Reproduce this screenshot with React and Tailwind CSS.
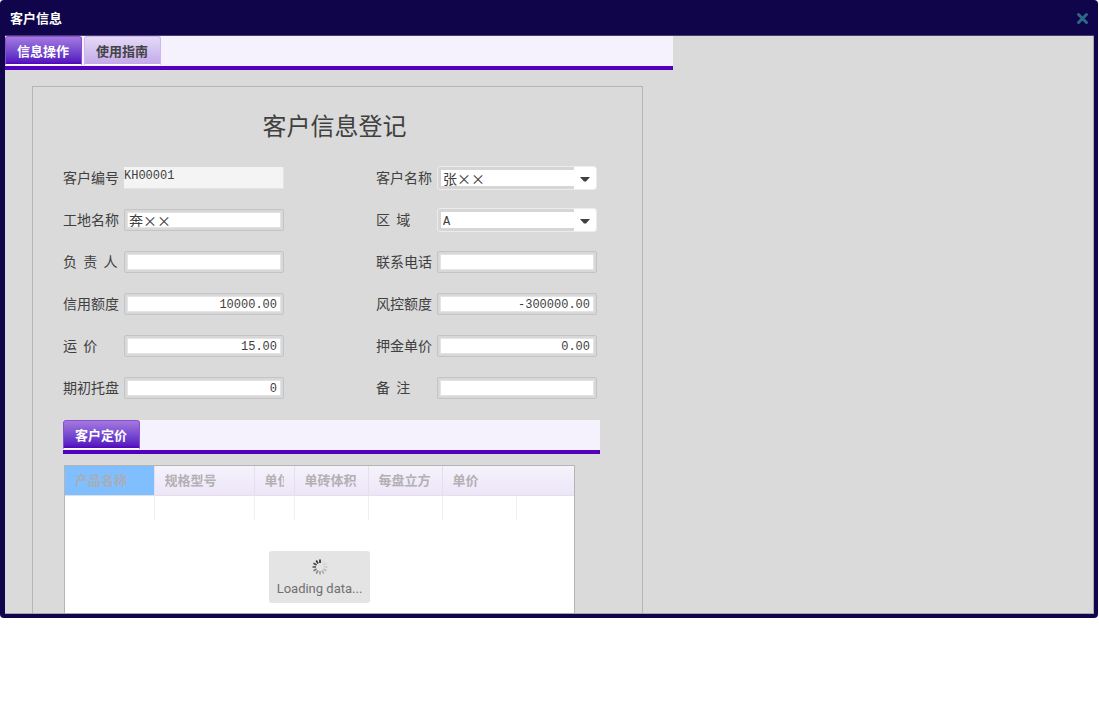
import React from 'react';

const columns = [
  { name: '产品名称', width: 'w-[89px]', sorted: true },
  { name: '规格型号', width: 'w-[100px]' },
  { name: '单位', width: 'w-[40px]' },
  { name: '单砖体积', width: 'w-[74px]' },
  { name: '每盘立方', width: 'w-[74px]' },
  { name: '单价', width: 'w-[74px]' },
];

const fields = [
  { id: 'code', label: '客户编号', value: 'KH00001', kind: 'readonly' },
  { id: 'name', label: '客户名称', value: '张××', kind: 'select' },
  { id: 'site', label: '工地名称', value: '奔××' },
  { id: 'area', label: '区\u00a0\u00a0域', value: 'A', kind: 'select' },
  { id: 'owner', label: '负\u00a0\u00a0责\u00a0\u00a0人', value: '' },
  { id: 'phone', label: '联系电话', value: '' },
  { id: 'credit', label: '信用额度', value: '10000.00', kind: 'number' },
  { id: 'risk', label: '风控额度', value: '-300000.00', kind: 'number' },
  { id: 'freight', label: '运\u00a0\u00a0价', value: '15.00', kind: 'number' },
  { id: 'deposit', label: '押金单价', value: '0.00', kind: 'number' },
  { id: 'pallet', label: '期初托盘', value: '0', kind: 'number' },
  { id: 'remark', label: '备\u00a0\u00a0注', value: '' },
];

const monoText = "text-xs font-['Liberation_Mono','Noto_Sans_CJK_SC',monospace]";
const cjkText = "text-sm font-['Noto_Sans_CJK_SC',sans-serif]";

function Control({ id, value, kind }) {
  if (kind === 'readonly') {
    return (
      <input
        id={id}
        readOnly
        defaultValue={value}
        className={`h-[22px] w-40 border-r border-b border-[#e4e4e4] bg-[#f4f4f4] pb-1 text-[#404040] outline-none ${monoText}`}
      />
    );
  }
  if (kind === 'select') {
    return (
      <span className="flex h-6 w-40 items-stretch overflow-hidden rounded-[3px] border border-[#ececec] bg-[#d6d6d6]">
        <select
          id={id}
          defaultValue={value}
          className={`my-[3px] ml-[3px] min-w-0 flex-1 appearance-none bg-white pl-0.5 text-[#404040] outline-none ${value === 'A' ? `pt-0.5 ${monoText}` : cjkText} leading-4`}
        >
          <option>{value}</option>
        </select>
        <span className="flex w-[22px] items-center justify-center bg-white">
          <svg width="10" height="5" viewBox="0 0 10 5" className="mt-0.5">
            <path d="M0 0h10L6 4.5H4z" fill="#404040" />
          </svg>
        </span>
      </span>
    );
  }
  return (
    <span className="flex h-[22px] w-40 rounded-[2px] border border-[#c4c4c4] bg-[#d8d8d8] p-0.5">
      <input
        id={id}
        defaultValue={value}
        className={`w-full min-w-0 border border-[#e4e4e4] bg-white pr-[3px] pl-px text-[#404040] outline-none ${kind === 'number' ? `pt-0.5 text-right ${monoText}` : cjkText}`}
      />
    </span>
  );
}

function Tab({ active, children }) {
  return (
    <button
      type="button"
      className={`flex h-[29px] w-[77px] items-center rounded-t-[3px] border pl-[11px] text-[13px] font-bold whitespace-nowrap ${
        active
          ? 'border-[#8a4fd0] border-b-white bg-linear-to-b from-[#a578e0] to-[#5200bd] text-white'
          : 'border-[#cdb6ee] border-b-white bg-linear-to-b from-[#e4daf6] to-[#c5a9ea] text-[#444]'
      }`}
    >
      {children}
    </button>
  );
}

function TabBar({ children }) {
  return (
    <div className="flex h-[34px] gap-0.5 border-b-4 border-[#5200bd] bg-[#f5f2fe]">
      {children}
    </div>
  );
}

function Spinner() {
  const shades = ['#ddd', '#d4d4d4', '#ccc', '#bbb', '#aaa', '#999', '#888', '#777', '#555', '#444', '#333', '#222'];
  return (
    <svg width="16" height="16" viewBox="-8 -8 16 16">
      {shades.map((shade, i) => (
        <path key={shade} d="M0-4V-7.5" stroke={shade} strokeWidth="1.6" transform={`rotate(${(i + 1) * 30})`} />
      ))}
    </svg>
  );
}

export default function App() {
  return (
    <main className="bg-white pr-px font-['Noto_Sans_CJK_SC',sans-serif] text-[#404040]">
      <section className="overflow-hidden rounded-[4px] bg-[#10044a] pr-1 pb-1 pl-[5px]">
        <header className="flex h-9 items-center justify-between border-b border-[#4a3c70] pr-[5px] pl-[5px]">
          <h1 className="text-[13px] font-bold text-white">客户信息</h1>
          <button type="button" aria-label="关闭" className="flex pt-0.5">
            <svg width="13" height="13" viewBox="0 0 13 13">
              <path d="M2.5 2.5l8 8M10.5 2.5l-8 8" stroke="#2b6a87" strokeWidth="3" strokeLinecap="round" />
            </svg>
          </button>
        </header>

        <div className="border-r border-b border-[#a6a3b2] bg-[#dadada]">
          <div className="w-[668px] max-w-full">
            <TabBar>
              <Tab active>信息操作</Tab>
              <Tab>使用指南</Tab>
            </TabBar>

            <div className="pt-4 pr-[30px] pl-[27px]">
              <form className="border border-b-0 border-[#b5b5b5] pl-[30px]">
                <h2 className="pt-5 pr-9 text-center text-2xl leading-9 whitespace-nowrap">客户信息登记</h2>

                <div className="mt-[23px] grid grid-cols-[313px_1fr]">
                  {fields.map((field) => (
                    <div key={field.id} className="flex h-[42px] items-start">
                      <div className="flex h-6 items-center">
                        <label htmlFor={field.id} className="w-[61px] pb-0.5 text-sm whitespace-nowrap">
                          {field.label}
                        </label>
                        <Control {...field} />
                      </div>
                    </div>
                  ))}
                </div>

                <div className="mt-0.5 mr-[42px]">
                  <TabBar>
                    <Tab active>客户定价</Tab>
                  </TabBar>
                  <div className="pt-[11px] pr-[25px] pl-px">
                    <div className="relative min-h-[148px] border border-b-0 border-[#b5b5b5] bg-white">
                      <table className="w-full table-fixed border-collapse text-[13px]">
                        <thead>
                          <tr className="h-[29px] bg-linear-to-b from-[#f5f3fc] to-[#ece5f8]">
                            {columns.map((col) => (
                              <th
                                key={col.name}
                                className={`border-b border-[#e4e0ea] px-[10px] py-0 text-left font-bold not-nth-6:border-r ${col.width} ${
                                  col.sorted ? 'bg-[#80bfff] text-[#a9adb5]' : 'text-[#b3b0b3]'
                                }`}
                              >
                                <div className="overflow-hidden leading-5 whitespace-nowrap">{col.name}</div>
                              </th>
                            ))}
                            <th className="border-b border-[#e4e0ea] p-0" />
                          </tr>
                        </thead>
                        <tbody>
                          <tr className="h-[25px]">
                            {columns.map((col) => (
                              <td key={col.name} className="border-r border-[#f0f0f0] p-0" />
                            ))}
                            <td className="p-0" />
                          </tr>
                        </tbody>
                      </table>
                      <div
                        role="status"
                        className="absolute top-[85px] left-[204px] flex h-[52px] w-[101px] flex-col items-center justify-end gap-1 rounded-[3px] bg-[#e4e4e4] pb-[5px] font-['Roboto',sans-serif] text-[13px] text-[#707070]"
                      >
                        <Spinner />
                        <span className="whitespace-nowrap">Loading data...</span>
                      </div>
                    </div>
                  </div>
                </div>
              </form>
            </div>
          </div>
        </div>
      </section>
    </main>
  );
}
